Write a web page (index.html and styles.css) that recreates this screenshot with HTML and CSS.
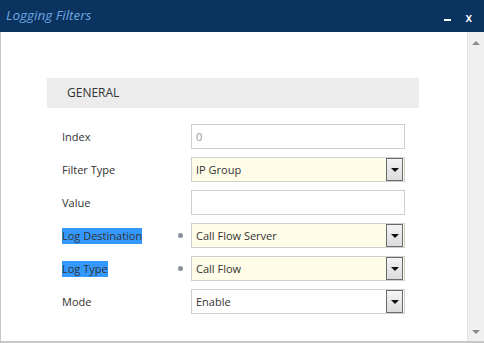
FILE: index.html
```html
<!DOCTYPE html>
<html>
<head>
<meta charset="utf-8">
<link rel="stylesheet" href="styles.css">
</head>
<body>
<div class="window">
  <div class="titlebar">
    <span class="title">Logging Filters</span>
    <span class="controls"><span class="min"></span><span class="close">x</span></span>
  </div>
  <div class="content">
    <div class="panel">
      <div class="section">GENERAL</div>
      <div class="form">
        <div class="row">
          <span class="label">Index</span><span class="dot off"></span>
          <div class="field input disabled">0</div>
        </div>
        <div class="row">
          <span class="label">Filter Type</span><span class="dot off"></span>
          <div class="field select yellow"><span class="val">IP Group</span><span class="btn"><span class="tri"></span></span></div>
        </div>
        <div class="row">
          <span class="label">Value</span><span class="dot off"></span>
          <div class="field input"></div>
        </div>
        <div class="row">
          <span class="label"><span class="hl">Log Destination</span></span><span class="dot"></span>
          <div class="field select yellow"><span class="val">Call Flow Server</span><span class="btn"><span class="tri"></span></span></div>
        </div>
        <div class="row">
          <span class="label"><span class="hl">Log Type</span></span><span class="dot"></span>
          <div class="field select yellow"><span class="val">Call Flow</span><span class="btn"><span class="tri"></span></span></div>
        </div>
        <div class="row">
          <span class="label">Mode</span><span class="dot off"></span>
          <div class="field select"><span class="val">Enable</span><span class="btn"><span class="tri"></span></span></div>
        </div>
      </div>
    </div>
    <div class="scrollbar">
      <span class="sarrow up"></span>
      <span class="sarrow down"></span>
    </div>
  </div>
</div>
</body>
</html>
```
FILE: styles.css
```css
* { box-sizing: border-box; }
html, body { margin: 0; padding: 0; }
body {
  width: 484px;
  height: 343px;
  overflow: hidden;
  font-family: "Open Sans", "DejaVu Sans", sans-serif;
  background: #fff;
}
.window {
  width: 484px;
  height: 343px;
  display: flex;
  flex-direction: column;
}
.titlebar {
  height: 32px;
  background: #0a3360;
  display: flex;
  align-items: center;
  justify-content: space-between;
  padding: 0 12px 0 6px;
  flex: none;
}
.title {
  color: #6ea6e2;
  font-style: italic;
  font-size: 13.5px;
  margin-top: -3px;
}
.controls {
  display: flex;
  align-items: center;
  gap: 14px;
  margin-top: 4px;
}
.min {
  width: 7px;
  height: 2px;
  background: #fff;
  margin-top: 3px;
}
.close {
  color: #fff;
  font-size: 12px;
  font-weight: 600;
  line-height: 12px;
}
.content {
  flex: 1;
  display: flex;
  border-left: 1px solid #c8c8c8;
  border-bottom: 2px solid #c8c8c8;
  min-height: 0;
}
.panel {
  flex: 1;
  padding: 46px 0 0 46px;
}
.section {
  width: 372px;
  height: 30px;
  background: #ececec;
  color: #333;
  font-size: 12px;
  line-height: 30px;
  padding-left: 20px;
}
.form {
  padding-top: 16px;
  padding-left: 15px;
  display: flex;
  flex-direction: column;
  gap: 8px;
}
.row {
  display: flex;
  align-items: center;
  height: 25px;
}
.label {
  width: 114px;
  font-size: 11px;
  color: #333;
}
.hl {
  background: #3399ff;
  line-height: 16px;
  display: inline-block;
}
.dot {
  width: 5px;
  height: 5px;
  border-radius: 50%;
  background: #8a8f99;
  margin-right: 8px;
  margin-left: 2px;
}
.dot.off { visibility: hidden; }
.field {
  width: 214px;
  height: 25px;
  border: 1px solid #cfcfcf;
  font-size: 11px;
  color: #333;
  display: flex;
  align-items: center;
  padding-left: 4px;
  background: #fff;
}
.disabled { color: #999; }
.yellow { background: #fffde8; }
.select { justify-content: space-between; padding-right: 1px; }
.btn {
  width: 17px;
  height: 23px;
  border: 1px solid #6a6a6a;
  background: linear-gradient(#f4f4f4, #dcdcdc);
  display: flex;
  align-items: center;
  justify-content: center;
}
.tri {
  width: 0;
  height: 0;
  border-left: 4px solid transparent;
  border-right: 4px solid transparent;
  border-top: 4px solid #111;
}
.scrollbar {
  width: 17px;
  flex: none;
  background: #f0f0f0;
  border-left: 1px solid #e2e2e2;
  display: flex;
  flex-direction: column;
  justify-content: space-between;
  align-items: center;
  padding: 9px 0 7px;
}
.sarrow {
  width: 0;
  height: 0;
  border-left: 4px solid transparent;
  border-right: 4px solid transparent;
}
.sarrow.up { border-bottom: 4px solid #8a8a8a; }
.sarrow.down { border-top: 4px solid #8a8a8a; }
```
